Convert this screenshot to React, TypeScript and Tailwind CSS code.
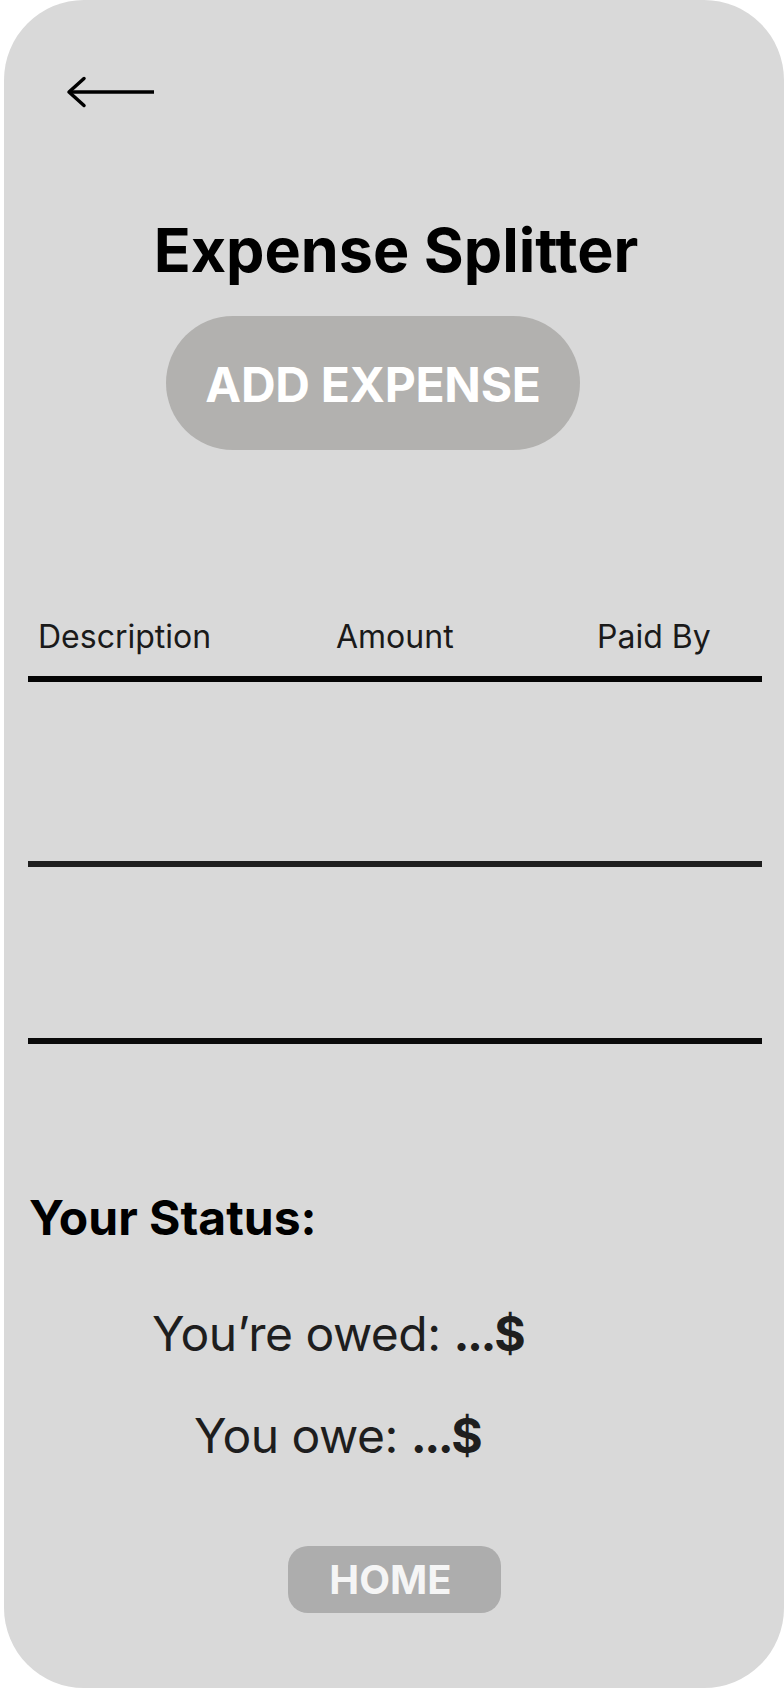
export default function App() {
  // Expense splitter screen: back arrow, title, add button, empty table and status
  const headers = [
    { label: 'Description', width: 'w-[298px]' },
    { label: 'Amount', width: 'w-[261px]' },
    { label: 'Paid By', width: '' },
  ];

  return (
    <div className="min-h-[1688px] bg-white font-['Inter','Liberation_Sans',sans-serif]">
      <div className="ml-[4px] flex h-[1688px] w-[780px] flex-col rounded-[80px] bg-[#d9d9d9]">
        <button className="ml-[62px] mt-[76px] self-start" aria-label="Back">
          <svg width="90" height="32" viewBox="0 0 90 32" fill="none">
            <path d="M3 16H88" stroke="#000" strokeWidth="3.5" />
            <path
              d="M18 2.5L3 16L18 29.5"
              stroke="#000"
              strokeWidth="3.5"
              strokeLinecap="round"
              strokeLinejoin="round"
            />
          </svg>
        </button>

        <h1 className="mt-[112px] h-[60px] pl-[4px] text-center text-[61px] font-bold leading-[60px] text-black">
          Expense Splitter
        </h1>

        <button className="ml-[162px] mt-[36px] flex h-[134px] w-[414px] items-center justify-center rounded-full bg-[#b2b1af] pt-[4px]">
          <span className="text-[48px] font-bold leading-none tracking-[-0.3px] text-white">ADD EXPENSE</span>
        </button>

        <div className="mt-[171px] flex pl-[34px] text-[32px] leading-none text-[#1a1a1a]">
          {headers.map((h) => (
            <span key={h.label} className={h.width}>
              {h.label}
            </span>
          ))}
        </div>
        <div className="ml-[24px] mt-[23px] h-[6px] w-[734px] bg-[#050505]" />
        <div className="ml-[24px] mt-[179px] h-[6px] w-[734px] bg-[#1e1e1e]" />
        <div className="ml-[24px] mt-[171px] h-[6px] w-[734px] bg-[#0a0a0a]" />

        <h2 className="ml-[25px] mt-[150px] text-[48px] font-bold leading-none text-black">
          Your Status:
        </h2>
        <p className="ml-[148px] mt-[68px] text-[48px] leading-none tracking-[-0.5px] text-[#1e1e1e]">
          You’re owed: <span className="font-bold tracking-[-2.5px]">...$</span>
        </p>
        <p className="ml-[190px] mt-[54px] text-[48px] leading-none tracking-[-0.5px] text-[#1e1e1e]">
          You owe: <span className="font-bold tracking-[-2.5px]">...$</span>
        </p>

        <button className="ml-[284px] mt-[86px] flex h-[67px] w-[213px] items-center justify-center rounded-[20px] bg-[#adadad] pr-[8px]">
          <span className="text-[40px] font-bold leading-none text-[#f5f5f5]">HOME</span>
        </button>
      </div>
    </div>
  );
}
